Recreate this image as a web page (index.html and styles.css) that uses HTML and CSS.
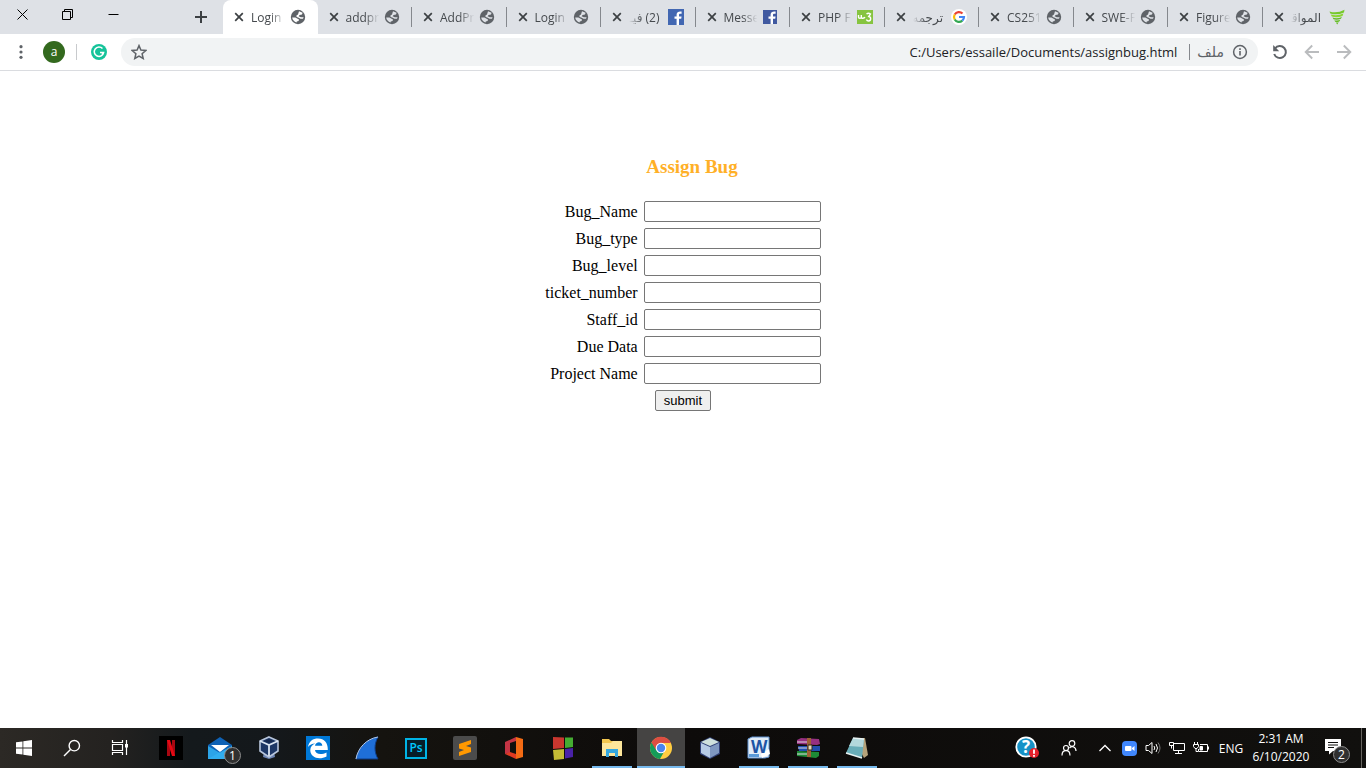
FILE: index.html
```html
<!DOCTYPE html>
<html lang="en">
<head>
<meta charset="utf-8">
<title>Assign Bug</title>
<link rel="stylesheet" href="styles.css">
</head>
<body>
<svg class="defs" aria-hidden="true">
  <symbol id="globe" viewBox="0 0 16 16"><circle cx="8" cy="8" r="7.200" fill="#5f6368"/><path class="land" d="M9 2.200L12.600 3.800 12 5.500 9.600 6 8.600 7.200 10.800 8.200 13.600 8.200 13 9.800 10.500 9.800 8.200 8.400 6.600 8 6.400 6.600 8 5.600zM2.200 8.600L5.400 8.400 9 10.600 8.600 12 6.800 12.400 6.600 13.600C4.200 12.800 2.400 11 2.200 8.600z"/></symbol>
  <symbol id="cross" viewBox="0 0 10 10"><path d="M1.200 1.200l7.600 7.600M8.800 1.200l-7.600 7.600" stroke="#3c4043" stroke-width="1.700" fill="none"/></symbol>
</svg>
<div class="window">
  <header class="tabstrip">
    <div class="controls">
      <button class="control" aria-label="Close window"><svg width="11" height="11" viewBox="0 0 11 11"><path d="M.5.5l10 10M10.500.5l-10 10" stroke="#000" fill="none"/></svg></button>
      <button class="control" aria-label="Restore window"><svg width="11" height="11" viewBox="0 0 11 11"><path d="M.5 2.500h8v8h-8zM2.500 2.500v-2h8v8h-2" stroke="#000" fill="none"/></svg></button>
      <button class="control" aria-label="Minimize window"><svg width="11" height="11" viewBox="0 0 11 11"><path d="M.5 5.500h10" stroke="#000"/></svg></button>
    </div>
    <button class="new-tab" aria-label="New tab"><svg width="12" height="12" viewBox="0 0 12 12"><path d="M6 0v12M0 6h12" stroke="#3c4043" stroke-width="2"/></svg></button>
    <nav class="tabs" aria-label="Open tabs">
      <div class="tab active"><button class="close" aria-label="Close tab"><svg><use href="#cross"/></svg></button><span class="title">Login</span><svg class="favicon"><use href="#globe"/></svg></div>
      <div class="tab"><button class="close" aria-label="Close tab"><svg><use href="#cross"/></svg></button><span class="title">addpr</span><svg class="favicon"><use href="#globe"/></svg></div>
      <div class="tab"><button class="close" aria-label="Close tab"><svg><use href="#cross"/></svg></button><span class="title">AddPr</span><svg class="favicon"><use href="#globe"/></svg></div>
      <div class="tab"><button class="close" aria-label="Close tab"><svg><use href="#cross"/></svg></button><span class="title">Login</span><svg class="favicon"><use href="#globe"/></svg></div>
      <div class="tab"><button class="close" aria-label="Close tab"><svg><use href="#cross"/></svg></button><span class="title" dir="rtl">(2) فيـ</span><svg class="favicon" viewBox="0 0 16 16"><path d="M0 0h16v16H0z" fill="#4267b2"/><path d="M11 16V9.800h2.200l.4-2.400H11V6c0-.8.4-1.300 1.300-1.300h1.300V2.500C11 2.100 8.600 2.700 8.600 5.600v1.800H6.500v2.400h2.100V16z" fill="#fff"/></svg></div>
      <div class="tab"><button class="close" aria-label="Close tab"><svg><use href="#cross"/></svg></button><span class="title">Messe</span><svg class="favicon" viewBox="0 0 16 16"><path d="M1 1h14v14H1z" fill="#4059a0"/><path d="M11 15V9.800h2.200l.4-2.400H11V6c0-.8.4-1.300 1.300-1.300h1.300V2.500C11 2.100 8.600 2.700 8.600 5.600v1.800H6.500v2.400h2.100V15z" fill="#fff"/></svg></div>
      <div class="tab"><button class="close" aria-label="Close tab"><svg><use href="#cross"/></svg></button><span class="title">PHP F</span><svg class="favicon" viewBox="0 0 16 16"><path d="M0 1h16v14H0z" fill="#86c440"/><path d="M1.500 6v2.300c0 1.300 2.800 1.300 2.800 0V6v2.300c0 1.300 3 1.300 3.600-.3M9.500 5q2-1.500 4 0L11.800 7.500c2.400.2 2.600 4.500-.2 4.500q-1.600 0-2.200-1.500" fill="none" stroke="#fff" stroke-width="1.400"/></svg></div>
      <div class="tab"><button class="close" aria-label="Close tab"><svg><use href="#cross"/></svg></button><span class="title" dir="rtl">ترجمه</span><svg class="favicon" viewBox="0 0 16 16"><circle cx="8" cy="8" r="8" fill="#fff"/><g fill="none" stroke-width="2.200"><path d="M11.500 4.500A5 5 0 0 0 3.700 5.500" stroke="#ea4335"/><path d="M3.700 5.500a5 5 0 0 0 0 5" stroke="#fbbc05"/><path d="M3.700 10.500a5 5 0 0 0 7.600 1.200" stroke="#34a853"/><path d="M11.300 11.700A5 5 0 0 0 13 8H8" stroke="#4285f4"/></g></svg></div>
      <div class="tab"><button class="close" aria-label="Close tab"><svg><use href="#cross"/></svg></button><span class="title">CS251</span><svg class="favicon"><use href="#globe"/></svg></div>
      <div class="tab"><button class="close" aria-label="Close tab"><svg><use href="#cross"/></svg></button><span class="title">SWE-F</span><svg class="favicon"><use href="#globe"/></svg></div>
      <div class="tab"><button class="close" aria-label="Close tab"><svg><use href="#cross"/></svg></button><span class="title">Figure</span><svg class="favicon"><use href="#globe"/></svg></div>
      <div class="tab"><button class="close" aria-label="Close tab"><svg><use href="#cross"/></svg></button><span class="title" dir="rtl">المواقـ</span><svg class="favicon" viewBox="0 0 16 16"><path d="M.5 2.500Q8 4.800 15.500.8L15 3.400Q8 6.500 1.300 4.400z" fill="#76c82c"/><path d="M1.800 5.500q6 1.900 12.600-.9l-.9 2.300q-5.500 2.400-10.700.6z" fill="#8ad632"/><path d="M3.500 8.500q4.500 1.500 9.400-.6l-1 1.900q-4 1.700-7.400.5zM5.400 11.200q3 .9 5.900-.4l-1 1.600q-2.200.9-4.200.3zM6.900 13.500q1.500.3 2.800-.2l-1.500 2.200z" fill="#65bd25"/></svg></div>
    </nav>
  </header>
  <div class="toolbar">
    <button class="tool menu" aria-label="Menu"><svg width="16" height="16" viewBox="0 0 16 16" fill="#5f6368"><circle cx="8" cy="2.700" r="1.600"/><circle cx="8" cy="8" r="1.600"/><circle cx="8" cy="13.300" r="1.600"/></svg></button>
    <button class="avatar">a</button>
    <span class="rule"></span>
    <button class="tool grammarly" aria-label="Grammarly"><svg width="16" height="16" viewBox="0 0 16 16"><circle cx="8" cy="8" r="8" fill="#15c39a"/><path d="M11.500 4.600A4.700 4.700 0 1 0 12.600 8.600H9M10.800 10.800l1.800-2.200" fill="none" stroke="#fff" stroke-width="1.500"/></svg></button>
    <div class="address">
      <button class="tool star" aria-label="Bookmark"><svg width="16" height="16" viewBox="0 0 16 16"><path d="M8 1.600l1.900 4.500 4.900.4-3.700 3.200 1.100 4.800L8 12l-4.200 2.500 1.100-4.800L1.200 6.500l4.900-.4z" fill="none" stroke="#5f6368" stroke-width="1.500"/></svg></button>
      <input class="url" type="text" aria-label="Address" value="C:/Users/essaile/Documents/assignbug.html">
      <span class="scheme" lang="ar">ملف</span>
      <svg width="16" height="16" viewBox="0 0 16 16"><circle cx="8" cy="8" r="6.400" fill="none" stroke="#5f6368" stroke-width="1.500"/><path d="M8 7v4.500M8 4.200v1.700" stroke="#5f6368" stroke-width="1.600"/></svg>
    </div>
    <button class="tool" aria-label="Reload"><svg width="16" height="16" viewBox="0 0 16 16"><path d="M3 4.500A6 6 0 1 1 2.200 10" fill="none" stroke="#5f6368" stroke-width="2"/><path d="M1.200 1v6.200h6z" fill="#5f6368"/></svg></button>
    <button class="tool" aria-label="Back"><svg width="16" height="16" viewBox="0 0 16 16"><path d="M15 8H2M8.200 1.500L1.700 8l6.500 6.500" fill="none" stroke="#babcbe" stroke-width="1.900"/></svg></button>
    <button class="tool" aria-label="Forward"><svg width="16" height="16" viewBox="0 0 16 16"><path d="M1 8h13M7.800 1.500L14.300 8l-6.500 6.500" fill="none" stroke="#babcbe" stroke-width="1.900"/></svg></button>
  </div>
  <main class="page">
    <h1 class="heading">Assign Bug</h1>
    <form>
      <table class="fields">
        <tr><td class="name"><label for="bug-name">Bug_Name</label></td><td><input class="field" id="bug-name" type="text"></td></tr>
        <tr><td class="name"><label for="bug-type">Bug_type</label></td><td><input class="field" id="bug-type" type="text"></td></tr>
        <tr><td class="name"><label for="bug-level">Bug_level</label></td><td><input class="field" id="bug-level" type="text"></td></tr>
        <tr><td class="name"><label for="ticket">ticket_number</label></td><td><input class="field" id="ticket" type="text"></td></tr>
        <tr><td class="name"><label for="staff">Staff_id</label></td><td><input class="field" id="staff" type="text"></td></tr>
        <tr><td class="name"><label for="due">Due Data</label></td><td><input class="field" id="due" type="text"></td></tr>
        <tr><td class="name"><label for="project">Project Name</label></td><td><input class="field" id="project" type="text"></td></tr>
        <tr><td class="action" colspan="2"><button class="submit" type="submit">submit</button></td></tr>
      </table>
    </form>
  </main>
  <footer class="taskbar">
    <div class="system">
      <button class="app" aria-label="Start"><svg width="16" height="16" viewBox="0 0 16 16"><path d="M0 2.300l6.500-.9v6.200H0zM7.300 1.300L16 0v7.600H7.300zM0 8.400h6.500v6.200L0 13.700zM7.300 8.400H16V16l-8.700-1.300z" fill="#fff"/></svg></button>
      <button class="app" aria-label="Search"><svg width="18" height="18" viewBox="0 0 18 18"><circle cx="11.300" cy="6.700" r="5.200" fill="none" stroke="#fff" stroke-width="1.400"/><path d="M7.500 10.500L1 17" stroke="#fff" stroke-width="1.500"/></svg></button>
      <button class="app" aria-label="Task view"><svg width="18" height="18" viewBox="0 0 18 18"><path d="M1.500 1v2.500h10V1M1.500 5.500h10v6h-10zM1.500 16v-2.500h10V16M15.500 1v15" fill="none" stroke="#fff" stroke-width="1.200"/><path d="M14 5h3v3.500h-3z" fill="#fff"/></svg></button>
    </div>
    <div class="apps">
      <button class="app" aria-label="Netflix"><svg width="24" height="24" viewBox="0 0 24 24"><path d="M0 0h24v24H0z" fill="#000"/><path d="M8 4h3v16H8zM13 4h3v16h-3z" fill="#a90711"/><path d="M8 4h3l5 16h-3z" fill="#e50914"/></svg></button>
      <button class="app" aria-label="Mail, 1 new"><svg width="26" height="24" viewBox="0 0 26 24"><path d="M1 9L13 1l12 8v14H1z" fill="#0f62b5"/><path d="M4 9h18l-9 7z" fill="#fff"/><path d="M1 10l12 7 12-7v13H1z" fill="#2ca4e8"/><path d="M1 23l12-7 12-6v13z" fill="#36b5f3" opacity=".6"/></svg><span class="count">1</span></button>
      <button class="app" aria-label="VirtualBox"><svg width="22" height="24" viewBox="0 0 22 24"><path d="M6 16l-1 5 6 2 6-2-1-5z" fill="#6e85b5"/><path d="M11 1l9 4v10l-9 6-9-6V5z" fill="#1d3766" stroke="#b8c6dc" stroke-width="1.600"/><path d="M2 5l9 4 9-4M11 9v11" fill="none" stroke="#dbe5f2" stroke-width="1.800"/><path d="M6 5l5-2 5 2-5 2z" fill="#14284f"/></svg></button>
      <button class="app" aria-label="Edge"><svg width="24" height="24" viewBox="0 0 24 24"><path d="M0 0h24v24H0z" fill="#0078d7"/><path d="M2 11C3 5 7 2.500 12 2.500c6.500 0 10 4.500 9.800 11.500H9c.3 4.600 6.500 5.200 11.500 2.500v4C13 24.500 4 21.500 4.300 14c.1-3.100 2-5.300 5-6.500C6 7.500 3.600 8.800 2 11zm7-1.200h7.300c0-5-6.800-4.600-7.300 0z" fill="#fff"/></svg></button>
      <button class="app" aria-label="Wireshark"><svg width="24" height="24" viewBox="0 0 24 24"><path d="M1 23C3 12 11 3 23 1c-4 7-4 15 0 22z" fill="#1f6fd8" stroke="#0e3c85"/><path d="M1 23C3 12 11 3 23 1" fill="none" stroke="#b8cce8"/></svg></button>
      <button class="app" aria-label="Photoshop"><span class="ps">Ps</span></button>
      <button class="app" aria-label="Sublime Text"><svg width="24" height="24" viewBox="0 0 24 24"><rect width="24" height="24" rx="2" fill="#4b4b4b"/><path d="M6 8l12-4v4l-5 2 5 1.500V16L6 20v-4l5-2-5-1.500z" fill="#ff9800"/></svg></button>
      <button class="app" aria-label="Office"><svg width="20" height="24" viewBox="0 0 20 24"><path d="M1 6l11-5v4L6 7v10l-5 1z" fill="#c43444"/><path d="M12 1l7 2v18l-7 2z" fill="#f46b14"/><path d="M1 18l5-2 6 2v5z" fill="#e13a21"/></svg></button>
      <button class="app" aria-label="Code editor"><svg width="22" height="24" viewBox="0 0 22 24"><path d="M1 1l11 .5V12l-11 1z" fill="#c9372f"/><path d="M13 1.500h8V11l-8 1z" fill="#45ad32"/><path d="M1 14l11-1v10l-10 1z" fill="#c4bb35"/><path d="M13 13l8-1v9l-8 1.500z" fill="#4a22a8"/></svg></button>
      <button class="app open" aria-label="File Explorer"><svg width="22" height="20" viewBox="0 0 22 20"><path d="M1 1h7l2 2h11v15H1z" fill="#f3c74f"/><path d="M1 5h9l2-2h9v15H1z" fill="#fde69b"/><path d="M5 19v-8h12v8h-3v-4H8v4z" fill="#35a8e0"/></svg></button>
      <button class="app open current" aria-label="Chrome"><svg width="24" height="24" viewBox="0 0 24 24"><circle cx="12" cy="12" r="11" fill="#ffcd40"/><path d="M12 12L2.500 6.500A11 11 0 0 0 11 23l5-9z" fill="#159c59"/><path d="M2.500 6.500A11 11 0 0 1 22 7H12L7 14z" fill="#dd4e42"/><circle cx="12" cy="12" r="5.300" fill="#fff"/><circle cx="12" cy="12" r="4.200" fill="#4a84ee"/></svg></button>
      <button class="app" aria-label="NetBeans"><svg width="24" height="24" viewBox="0 0 24 24"><path d="M12 1l10 5v12l-10 5-10-5V6z" fill="#303f75"/><path d="M12 2l9 4-9 4-9-4z" fill="#cfe0dd"/><path d="M3 7l9 4v11l-9-5z" fill="#b7cbe6"/><path d="M21 7l-9 4v11l9-5z" fill="#7f97c0"/></svg></button>
      <button class="app open" aria-label="Word"><svg width="24" height="24" viewBox="0 0 24 24"><path d="M1 3l4-2h17v20l-4 1H1z" fill="#e2edf8" stroke="#5e91cf"/><path d="M2 18h10v3H2z" fill="#5b9bd9"/><path d="M14 18l8-5 1 5-8 4z" fill="#fff"/><text class="word-mark" x="4" y="17">W</text></svg></button>
      <button class="app open" aria-label="WinRAR"><svg width="26" height="22" viewBox="0 0 26 22"><path d="M2 3l4-2 18 1 1 5-3 1L2 7z" fill="#963080"/><path d="M3 9h22v5H4z" fill="#204fb0"/><path d="M2 14l22 1v4l-3 2-19-2z" fill="#1d8b36"/><path d="M2 5h11M3 11h10M2 17h11" stroke="#e0dde5"/><path d="M12 1h4v19h-4z" fill="#a06135"/><path d="M13 8h4v5h-4z" fill="#e5d9b3" stroke="#332821"/></svg></button>
      <button class="app open" aria-label="Notepad"><svg width="24" height="24" viewBox="0 0 24 24"><path d="M9 3l11-1 3 17-4 3z" fill="#b5a27a"/><path d="M8 2l11 1-2 19-16-5z" fill="#69adb8"/><path d="M8 2l11 1-1 8-14-1z" fill="#b4d8dc"/><path d="M1 17l16 5M8 2l11 1" stroke="#e7f2f2" stroke-width="1.400"/></svg></button>
    </div>
    <div class="tray">
      <button class="tray-item help" aria-label="Help"><svg width="26" height="24" viewBox="0 0 26 24"><circle cx="11" cy="11" r="9.700" fill="#1692c7" stroke="#fff" stroke-width="1.800"/><text class="help-mark" x="7" y="17">?</text><circle cx="19" cy="17" r="5" fill="#e3212b"/><path d="M19 13.500v4.200M19 19v1.800" stroke="#fff" stroke-width="1.800"/></svg></button>
      <button class="tray-item people" aria-label="People"><svg width="16" height="16" viewBox="0 0 16 16" fill="none" stroke="#fff" stroke-width="1.200"><circle cx="5" cy="8" r="2.500"/><path d="M1 15.500c0-6.500 8-6.500 8 0"/><circle cx="11" cy="3.500" r="2.800"/><path d="M8.500 8C11 5.500 15 7 15 11"/></svg></button>
      <button class="tray-item" aria-label="Show hidden icons"><svg width="12" height="8" viewBox="0 0 12 8"><path d="M.5 7L6 1.500 11.500 7" fill="none" stroke="#fff" stroke-width="1.300"/></svg></button>
      <button class="tray-item" aria-label="Zoom"><svg width="15" height="15" viewBox="0 0 15 15"><rect width="15" height="15" rx="4" fill="#4087fc"/><rect x="3" y="5" width="6.500" height="5" rx="1" fill="#fff"/><path d="M10 7l2.500-2v5L10 8z" fill="#fff"/></svg></button>
      <button class="tray-item" aria-label="Volume"><svg width="16" height="16" viewBox="0 0 16 16" fill="none" stroke="#fff"><path d="M1 5.500h2.500L7 2.500v11l-3.500-3H1z"/><path d="M9 6q1.500 2 0 4M11 4q3 4 0 8"/><path d="M13 2.500q4 5.500 0 11" stroke="#777"/></svg></button>
      <button class="tray-item" aria-label="Network"><svg width="16" height="16" viewBox="0 0 16 16" fill="none" stroke="#fff"><path d="M5 3.500h10.500v7H4.500V5M9.500 10.500v3M6 13.500h7M.5 2.500h4v3h-4zM2.500 5.500v3"/></svg></button>
      <button class="tray-item" aria-label="Battery"><svg width="16" height="16" viewBox="0 0 16 16" fill="none" stroke="#fff"><path d="M7 4.500h7.500v7h-9V9M15.500 6.500v3M1.500 2v2M4.500 2v2M.5 4.500h5v2l-1.500 2H2l-1.500-2zM3 8.500v3h2"/><path d="M7 6.500h2.500v3.500H7z" fill="#fff"/></svg></button>
      <button class="tray-item language">ENG</button>
      <button class="clock"><span>2:31 AM</span><span>6/10/2020</span></button>
      <button class="tray-item notices" aria-label="2 notifications"><svg width="28" height="26" viewBox="0 0 28 26"><path d="M2 4h16v12h-8l-4 3.500V16H2z" fill="#fff"/><path d="M5 7.500h10M5 10h10M5 12.500h6" stroke="#11100e"/></svg><span class="count notice-count">2</span></button>
    </div>
  </footer>
</div>
</body>
</html>
```
FILE: styles.css
```css
* { box-sizing: border-box; }
body { margin: 0; background: #fff; font-family: "Open Sans", "Noto Sans", "DejaVu Sans", sans-serif; }
button { border: 0; padding: 0; background: none; color: inherit; font: inherit; }
svg { display: block; flex: none; }
.defs { position: absolute; width: 0; height: 0; }
.window { display: flex; flex-direction: column; min-height: 100vh; }

/* Tab strip */
.tabstrip { display: flex; height: 34px; padding-right: 9px; background: #dee1e6; }
.controls { display: flex; }
.control { display: grid; place-items: center; width: 46px; height: 28px; }
.control:first-child { width: 44px; }
.new-tab { display: grid; place-items: center; width: 28px; margin: 0 8px 0 51px; }
.tabs { display: flex; flex: 1; min-width: 0; }
.tab { --land: #dee1e6; display: flex; align-items: center; flex: 1 1 0; min-width: 0; padding: 0 12px 0 11px; font-size: 12px; color: #45494d; background: linear-gradient(#85888d, #85888d) right center / 1px 20px no-repeat; }
.tab:last-child { background: none; }
.tab.active { --land: #fff; background: #fff; border-radius: 8px 8px 0 0; }
.land { fill: var(--land); }
.close { flex: none; }
.close svg { width: 10px; height: 10px; }
.title { flex: 1; min-width: 0; margin: 0 4px 0 7px; padding-right: 3px; overflow: hidden; white-space: nowrap; mask-image: linear-gradient(to right, #000 55%, transparent 98%); }
.title[dir="rtl"] { padding: 0; margin-right: 8px; mask-image: linear-gradient(to left, #000 55%, transparent); }
.favicon { width: 16px; height: 16px; }

/* Toolbar */
.toolbar { display: flex; align-items: center; height: 37px; padding-right: 14px; gap: 16px; border-bottom: 1px solid #dadce0; background: #fff; }
.tool { flex: none; }
.menu { margin-left: 13px; }
.avatar { width: 22px; height: 22px; margin-left: -2px; border-radius: 50%; background: #33691e; color: #fff; font-size: 12px; line-height: 20px; }
.rule { width: 1px; height: 16px; margin-left: -5px; background: #c8cacd; }
.grammarly { margin: 0 -2px; }
.address { display: flex; align-items: center; flex: 1; min-width: 0; height: 28px; padding: 0 10px; margin-right: -2px; border-radius: 14px; background: #f1f3f4; }
.url { flex: 1; min-width: 0; border: 0; padding: 0 12px 0 0; background: none; color: #202124; text-align: right; font: 13px "Open Sans", "Noto Sans", sans-serif; outline: 0; }
.scheme { padding: 0 8px 0 7px; border-left: 1px solid #85888d; color: #5f6368; font-size: 14px; line-height: 16px; }

/* Page */
.page { flex: 1; padding-top: 85px; font-family: "Liberation Serif", serif; }
.heading { margin: 0 0 18px; padding-left: 18px; text-align: center; font-size: 19px; line-height: 22px; color: #ffb027; }
.fields { margin: 0 auto; border-spacing: 4px; font-size: 16px; line-height: 19px; }
.fields td { padding: 1px; }
.name { text-align: right; }
.field { display: block; width: 177px; height: 21px; border: 1px solid #767676; border-radius: 2px; }
.action { text-align: center; }
.submit { width: 56px; height: 21px; border: 1px solid #767676; border-radius: 2px; background: #efefef; color: #000; font: 13px "Liberation Sans", sans-serif; }

/* Taskbar */
.taskbar { display: flex; height: 40px; color: #fff; background: linear-gradient(to right, #2c2925, #242220 8%, #14191c 14%, #14181b 20%, #15130f 28%, #0d0b0a 50%, #11100e); }
.system { display: flex; }
.apps { display: flex; gap: 1px; margin-left: 3px; }
.app { position: relative; display: grid; place-items: center; width: 48px; height: 40px; }
.open { background: linear-gradient(#76b9ed, #76b9ed) center bottom / 40px 2px no-repeat; }
.current { background: linear-gradient(#76b9ed, #76b9ed) center bottom / 48px 2px no-repeat #454443; }
.ps { width: 22px; height: 21px; border: 2px solid #00b4e6; background: #061e2a; color: #00c8ff; font-size: 12px; font-weight: 600; line-height: 16px; }
.word-mark { font: bold 17px "Open Sans", sans-serif; fill: #1d55a5; }
.help-mark { font: bold 17px "Open Sans", sans-serif; fill: #fff; }
.count { position: absolute; right: 3px; bottom: 4px; width: 17px; height: 17px; border: 1px solid #8d8d8d; border-radius: 50%; background: #303030; font-size: 12px; line-height: 15px; text-align: center; }
.tray { display: flex; margin-left: auto; margin-right: 4px; padding-right: 10px; border-right: 1px solid #66645f; }
.tray-item { position: relative; display: grid; place-items: center; width: 24px; height: 40px; font-size: 12px; }
.help { width: 28px; margin-right: 15px; }
.people { margin-right: 12px; }
.language { width: 36px; }
.clock { display: flex; flex-direction: column; align-items: center; width: 64px; padding-top: 2px; font-size: 12px; line-height: 18px; }
.notices { width: 28px; margin-left: 10px; }
.notice-count { right: 1px; bottom: 5px; }
```
